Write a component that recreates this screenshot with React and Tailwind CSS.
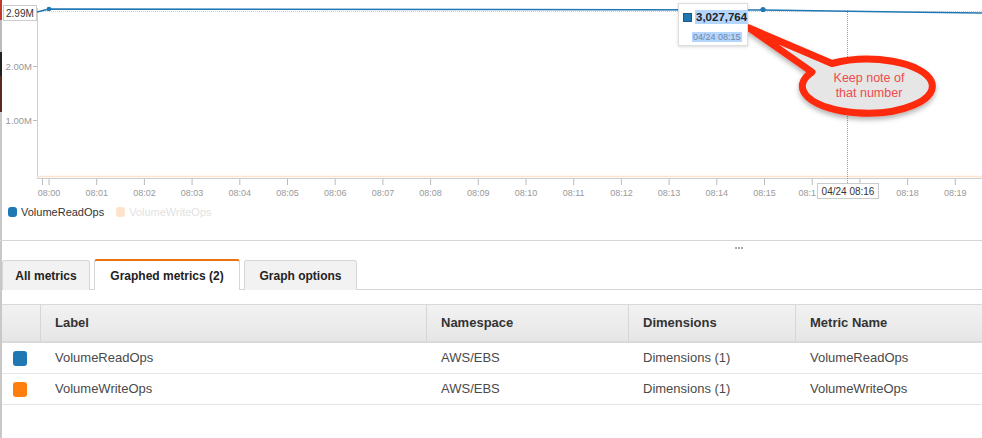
import React from 'react';

const ticks = ['08:00', '08:01', '08:02', '08:03', '08:04', '08:05', '08:06', '08:07', '08:08', '08:09', '08:10', '08:11', '08:12', '08:13', '08:14', '08:15', '08:16', '08:17', '08:18', '08:19'];

const rows = [
  { color: 'bg-[#1f77b4]', label: 'VolumeReadOps', ns: 'AWS/EBS', dims: 'Dimensions (1)', metric: 'VolumeReadOps' },
  { color: 'bg-[#ff7f0e]', label: 'VolumeWriteOps', ns: 'AWS/EBS', dims: 'Dimensions (1)', metric: 'VolumeWriteOps' },
];

const Chart = () => {
  const tx = (i) => 49 + i * 47.7;
  return (
    <svg width="982" height="200" className="block" style={{ fontFamily: '"Liberation Sans", Arial, sans-serif' }}>
      {/* y axis */}
      <line x1="37.5" y1="8" x2="37.5" y2="178" stroke="#cfcfcf" />
      <line x1="33" y1="66.5" x2="37" y2="66.5" stroke="#bbb" />
      <text x="32" y="70" textAnchor="end" fontSize="9.5" fill="#999">2.00M</text>
      <line x1="33" y1="120.5" x2="37" y2="120.5" stroke="#bbb" />
      <text x="32" y="124" textAnchor="end" fontSize="9.5" fill="#999">1.00M</text>

      {/* x axis */}
      <line x1="37" y1="176.5" x2="982" y2="176.5" stroke="#fde4d0" strokeWidth="1.5" />
      <line x1="37" y1="178.5" x2="982" y2="178.5" stroke="#cfcfcf" />
      <line x1="42.5" y1="179" x2="42.5" y2="185" stroke="#bbb" />
      {ticks.map((t, i) => (
        <g key={t}>
          <line x1={tx(i)} y1="179" x2={tx(i)} y2="185" stroke="#bbb" />
          {t === '08:16' ? (
            <text x="816" y="196" textAnchor="end" fontSize="9" fill="#999">08:1</text>
          ) : t === '08:17' ? null : (
            <text x={tx(i)} y="196" textAnchor="middle" fontSize="9" fill="#999">{t}</text>
          )}
        </g>
      ))}

      {/* series */}
      <line x1="37" y1="11.5" x2="982" y2="11.5" stroke="#c9d3dc" strokeDasharray="1 1" />
      <polyline points="37,12 49,9 500,9.5 763,10 900,12 982,13" fill="none" stroke="#1f77b4" strokeWidth="1.5" />
      <circle cx="49" cy="9" r="2.3" fill="#1f77b4" />
      <circle cx="763" cy="9.5" r="2.6" fill="#1f77b4" />

      {/* hover line */}
      <line x1="847.5" y1="10" x2="847.5" y2="183" stroke="#999" strokeDasharray="1 1" />

      {/* y value flag */}
      <rect x="3.5" y="5.5" width="33" height="15" fill="#fff" stroke="#ccc" />
      <text x="6" y="17" fontSize="10" fill="#333">2.99M</text>

      {/* x hover flag */}
      <rect x="817.5" y="183.5" width="61" height="15" fill="#fff" stroke="#ccc" />
      <text x="848" y="195" textAnchor="middle" fontSize="10" fill="#333">04/24 08:16</text>

      {/* callout */}
      <defs>
        <filter id="sh" x="-20%" y="-20%" width="140%" height="160%">
          <feDropShadow dx="0" dy="3" stdDeviation="2.5" floodColor="#000" floodOpacity="0.3" />
        </filter>
      </defs>
      <path
        d="M 832 63.5 L 749 28 L 812 72 A 65 27 0 1 0 832 63.5 Z"
        fill="#e6e6e6"
        stroke="#fd2a0a"
        strokeWidth="7"
        strokeLinejoin="round"
        filter="url(#sh)"
      />
      <text x="869" y="82" textAnchor="middle" fontSize="12.5" fill="#ef4b4b">Keep note of</text>
      <text x="869" y="97" textAnchor="middle" fontSize="12.5" fill="#ef4b4b">that number</text>
    </svg>
  );
};

export default function App() {
  return (
    <div
      className="relative w-[982px] h-[438px] overflow-hidden bg-white text-[#333]"
      style={{ fontFamily: '"Liberation Sans", Arial, sans-serif' }}
    >
      {/* window edge */}
      <div className="absolute left-0 top-0 h-full w-[2px] flex flex-col">
        <div className="h-[20px] bg-[#c0392b]" />
        <div className="h-[32px] bg-[#bbb]" />
        <div className="h-[24px] bg-[#222]" />
        <div className="h-[36px] bg-[#5a2a22]" />
        <div className="flex-1 bg-[#c8c8c8]" />
      </div>

      {/* graph */}
      <div className="relative h-[241px] border-b border-[#d6d6d6]">
        <Chart />
        <div className="flex items-center h-[24px] pl-[8px] text-[11px]">
          <span className="w-[9px] h-[10px] shrink-0 rounded-[3px] bg-[#1f77b4] mr-[4px]" />
          <span className="text-[#333]">VolumeReadOps</span>
          <span className="w-[9px] h-[10px] shrink-0 rounded-[3px] bg-[#fde3cc] ml-[12px] mr-[4px]" />
          <span className="text-[#e2e2e2]">VolumeWriteOps</span>
        </div>

        {/* tooltip */}
        <div className="absolute left-[678px] top-[3px] w-[70px] h-[43px] bg-white border border-[#ddd] shadow-[0_1px_3px_rgba(0,0,0,0.15)]">
          <div className="flex items-center mt-[6px] ml-[4px]">
            <span className="w-[9px] h-[9px] shrink-0 bg-[#1f77b4] border border-[#155a8a]" />
            <span className="ml-[3px] px-[1px] bg-[#b4d5fe] text-[11.5px] font-bold leading-[14px] text-[#222] whitespace-nowrap">3,027,764</span>
          </div>
          <div className="ml-[13px] mt-[5px] leading-[12px]">
            <span className="bg-[#b4d5fe] text-[9px] leading-[12px] text-[#6f87a6] px-[1px] whitespace-nowrap">04/24 08:15</span>
          </div>
        </div>
      </div>

      {/* resize grip */}
      <div className="h-[18px] relative">
        <div className="absolute left-[735px] top-[6px] flex gap-[1px]">
          <span className="w-[2px] h-[2px] bg-[#aaa]" />
          <span className="w-[2px] h-[2px] bg-[#aaa]" />
          <span className="w-[2px] h-[2px] bg-[#aaa]" />
        </div>
      </div>

      {/* tabs */}
      <div className="flex items-end h-[31px] border-b border-[#d6d6d6] pl-[2px] gap-[4px] text-[12px] font-bold">
        <div className="h-[30px] w-[88px] flex items-center justify-center bg-[#f2f2f2] border border-b-0 border-[#d6d6d6] rounded-t-[3px] text-[#222] mb-[-1px]">
          All metrics
        </div>
        <div className="h-[31px] w-[146px] flex items-center justify-center bg-white border border-b-0 border-[#d6d6d6] border-t-2 border-t-[#ec7211] rounded-t-[3px] text-[#222] mb-[-1px] relative z-10">
          Graphed metrics (2)
        </div>
        <div className="h-[30px] w-[113px] flex items-center justify-center bg-[#f2f2f2] border border-b-0 border-[#d6d6d6] rounded-t-[3px] text-[#222] mb-[-1px]">
          Graph options
        </div>
      </div>

      {/* table */}
      <div className="mt-[14px] text-[13px]">
        <div className="flex h-[39px] bg-gradient-to-b from-[#f2f2f2] to-[#e6e6e6] border-t border-b-2 border-[#d9d9d9] font-bold text-[#333]">
          <div className="w-[41px] border-r border-[#d6d6d6]" />
          <div className="w-[386px] flex items-center pl-[14px] border-r border-[#d6d6d6]">Label</div>
          <div className="w-[202px] flex items-center pl-[14px] border-r border-[#d6d6d6]">Namespace</div>
          <div className="w-[167px] flex items-center pl-[14px] border-r border-[#d6d6d6]">Dimensions</div>
          <div className="flex-1 flex items-center pl-[14px]">Metric Name</div>
        </div>
        {rows.map((r) => (
          <div key={r.label} className="flex h-[31px] border-b border-[#e6e6e6] text-[#4a4a4a]">
            <div className="w-[41px] flex items-center pl-[13px]">
              <span className={`w-[14px] h-[15px] rounded-[3px] ${r.color}`} />
            </div>
            <div className="w-[386px] flex items-center pl-[14px]">{r.label}</div>
            <div className="w-[202px] flex items-center pl-[14px]">{r.ns}</div>
            <div className="w-[167px] flex items-center pl-[14px]">{r.dims}</div>
            <div className="flex-1 flex items-center pl-[14px]">{r.metric}</div>
          </div>
        ))}
      </div>
    </div>
  );
}
